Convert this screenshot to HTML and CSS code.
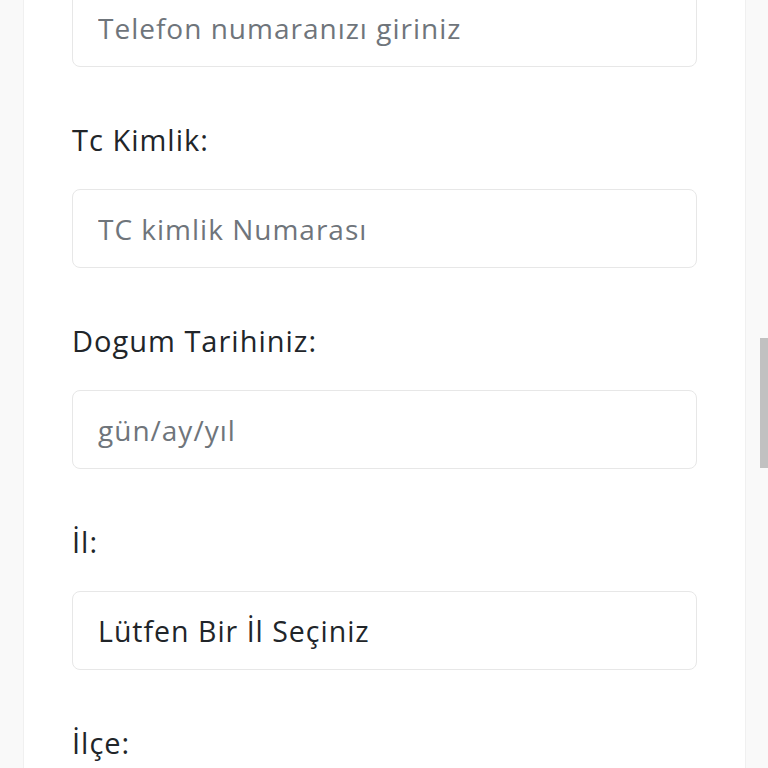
FILE: index.html
```html
<!DOCTYPE html>
<html lang="tr">
<head>
    <meta charset="UTF-8">
    <meta name="viewport" content="width=device-width, initial-scale=1.0">
    <title>Başvuru Formu</title>
    <link rel="stylesheet" href="styles.css">
</head>
<body>

    <div class="form-card">
        <form class="apply-form">
            <input class="form-field" type="tel" placeholder="Telefon numaranızı giriniz">

            <label class="form-label" for="tc">Tc Kimlik:</label>
            <input class="form-field" id="tc" type="text" placeholder="TC kimlik Numarası">

            <label class="form-label" for="dogum">Dogum Tarihiniz:</label>
            <input class="form-field" id="dogum" type="text" placeholder="gün/ay/yıl">

            <label class="form-label" for="il">İl:</label>
            <select class="form-field form-select" id="il">
                <option>Lütfen Bir İl Seçiniz</option>
            </select>

            <label class="form-label" for="ilce">İlçe:</label>
        </form>
    </div>

    <div class="scroll-thumb"></div>

</body>
</html>
```

FILE: styles.css
```css
/* Basvuru formu - mobil gorunum */
:root {
    --page-bg: #f9f9f9;
    --card-bg: #ffffff;
    --card-border: #f0f0f0;
    --field-border: #e7e7e7;
    --text-dark: #212529;
    --text-muted: #6f757b;
}

html, body {
    height: 100%;
    margin: 0;
    overflow: hidden;
}

body {
    background: var(--page-bg);
    font-family: 'Open Sans', 'Noto Sans', sans-serif;
    color: var(--text-dark);
}

.form-card {
    margin: -12px 22px 0 23px;
    background: var(--card-bg);
    border-left: 1px solid var(--card-border);
    border-right: 1px solid var(--card-border);
    padding: 0 48px;
    min-height: 100%;
}

.apply-form {
    display: flex;
    flex-direction: column;
}

.form-label {
    font-size: 29px;
    letter-spacing: 1px;
    line-height: 42px;
    margin: 52px 0 28px;
    color: var(--text-dark);
}

.form-field {
    box-sizing: border-box;
    width: 100%;
    height: 79px;
    margin: 0;
    padding: 0 25px;
    border: 1px solid var(--field-border);
    border-radius: 8px;
    background: var(--card-bg);
    font-family: inherit;
    font-size: 28px;
    letter-spacing: 1px;
    color: var(--text-dark);
    outline: none;
}

.form-field::placeholder {
    color: var(--text-muted);
}

.form-select {
    appearance: none;
    -webkit-appearance: none;
    font-size: 28.5px;
}

/* sayfa kaydirma cubugu */
.scroll-thumb {
    position: fixed;
    right: 0;
    top: 338px;
    width: 8px;
    height: 130px;
    background: #c1c1c1;
}
```
